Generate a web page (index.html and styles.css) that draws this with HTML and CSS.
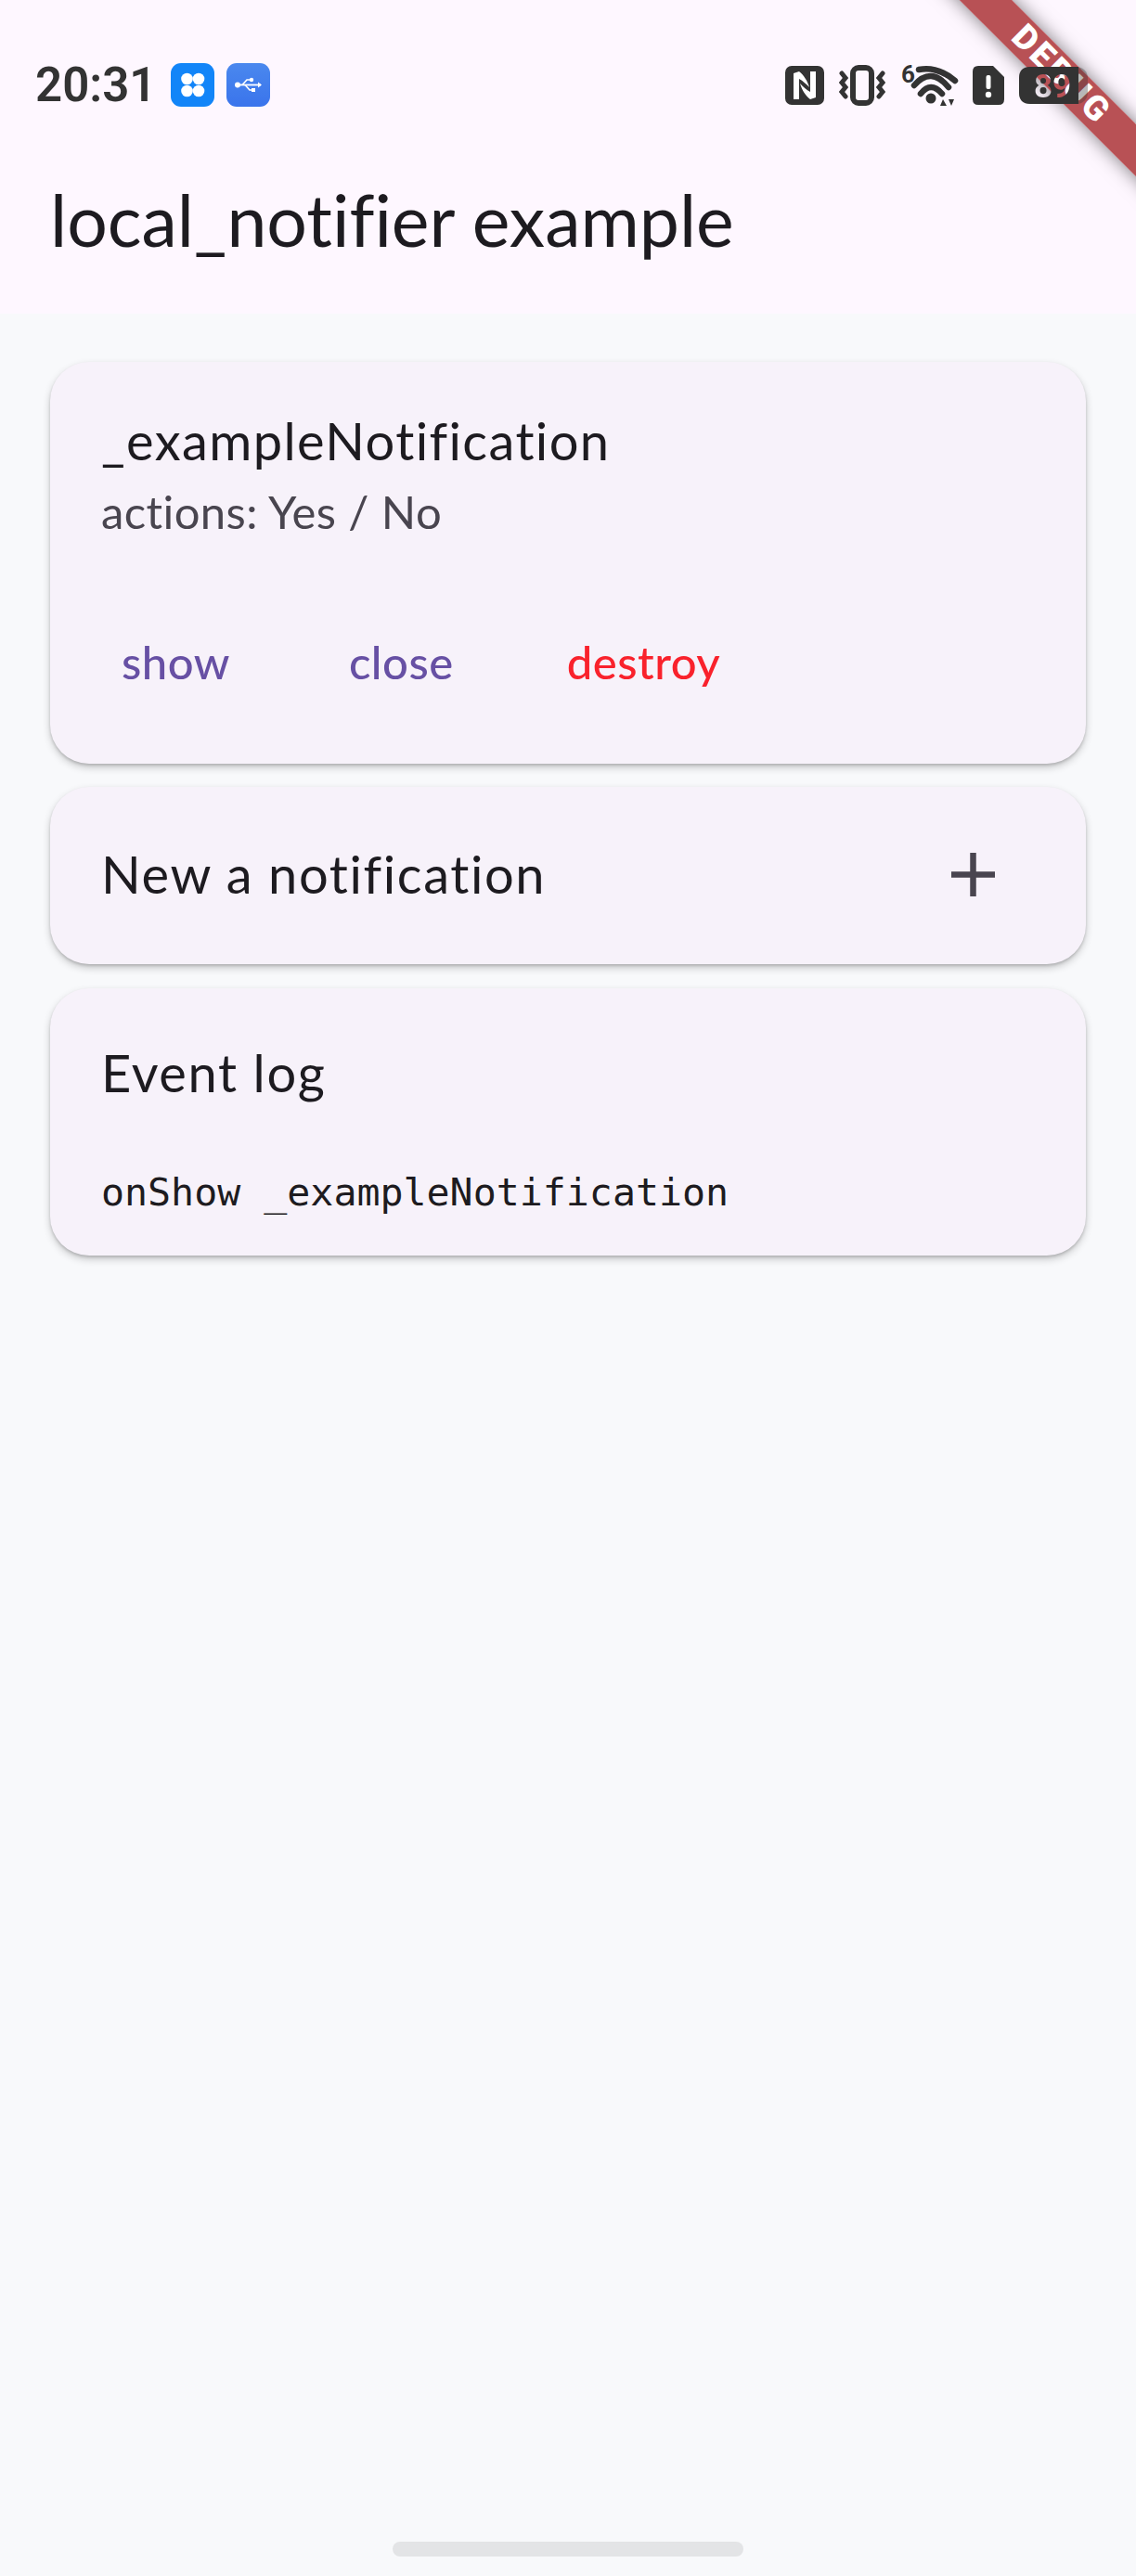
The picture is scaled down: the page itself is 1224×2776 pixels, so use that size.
FILE: index.html
```html
<!DOCTYPE html>
<html lang="en">
<head>
    <meta charset="UTF-8">
    <meta name="viewport" content="width=device-width, initial-scale=1.0">
    <title>local_notifier example</title>
    <link rel="stylesheet" href="styles.css">
</head>
<body>
    <div id="screen">
        <!-- Status bar and app bar -->
        <div class="top-area">
            <div class="status-bar">
                <span class="clock">20:31</span>
                <span class="app-icon app-icon-blue">
                    <svg width="47" height="47" viewBox="0 0 47 47">
                        <circle cx="17.5" cy="17" r="6.3" fill="#fff"/>
                        <circle cx="30" cy="17" r="6.3" fill="#fff"/>
                        <circle cx="17.5" cy="30" r="6.3" fill="#fff"/>
                        <circle cx="30" cy="30" r="6.3" fill="#fff"/>
                    </svg>
                </span>
                <span class="app-icon app-icon-usb">
                    <svg width="47" height="47" viewBox="0 0 47 47">
                        <path d="M10 23.500H37" stroke="#fff" stroke-width="1.800" fill="none"/>
                        <circle cx="12" cy="23.500" r="3" fill="#fff"/>
                        <path d="M17 23.500L22 18H26M20 23.500L25 29H28" stroke="#fff" stroke-width="1.600" fill="none"/>
                        <circle cx="27" cy="18" r="2.200" fill="#fff"/>
                        <rect x="27" y="27" width="4" height="4" fill="#fff"/>
                        <path d="M34 20.500L38 23.500L34 26.500Z" fill="#fff"/>
                    </svg>
                </span>
                <div class="status-icons">
                    <svg width="42" height="42" viewBox="0 0 42 42">
                        <rect width="42" height="42" rx="7" fill="#333"/>
                        <path d="M9 8L15 6C20 10 24 16 26 23C23 20 19 16 15 14V36H9Z" fill="#fff"/>
                        <path d="M33 34L27 36C22 32 18 26 16 19C19 22 23 26 27 28V6H33Z" fill="#fff"/>
                    </svg>
                    <svg width="50" height="44" viewBox="0 0 50 44">
                        <rect x="15" y="3" width="20" height="38" rx="6" fill="none" stroke="#333" stroke-width="6"/>
                        <path d="M3 9L7 14L3 19L7 24L3 29L7 34M47 9L43 14L47 19L43 24L47 29L43 34" fill="none" stroke="#333" stroke-width="5" stroke-linecap="round"/>
                    </svg>
                    <svg class="wifi-icon" width="62" height="46" viewBox="0 0 62 46">
                        <text x="1" y="20" class="wifi-six">6</text>
                        <path d="M20 6Q40 2 59 18M15 23Q33 2 52 25M22 32Q33 18 45 32" fill="none" stroke="#333" stroke-width="6.500" stroke-linecap="round"/>
                        <circle cx="33" cy="37" r="5.500" fill="#333"/>
                        <path d="M46 38L50 45H43ZM52 38H58L55 45Z" fill="#333"/>
                    </svg>
                    <svg width="34" height="42" viewBox="0 0 34 42">
                        <path d="M6 0H22L34 12V36Q34 42 28 42H6Q0 42 0 36V6Q0 0 6 0Z" fill="#333"/>
                        <rect x="14.500" y="10" width="5" height="15" rx="2" fill="#fff"/>
                        <circle cx="17" cy="31" r="3.200" fill="#fff"/>
                    </svg>
                    <!-- digits are cut out of the battery, the banner shows through them -->
                    <svg width="74" height="40" viewBox="0 0 74 40">
                        <mask id="batteryDigits">
                            <rect width="74" height="40" fill="#fff"/>
                            <text x="36" y="33" text-anchor="middle" class="battery-level">89</text>
                        </mask>
                        <g mask="url(#batteryDigits)">
                            <rect width="74" height="40" rx="12" fill="#333" fill-opacity="0.35"/>
                            <path d="M12 0H64V40H12Q0 40 0 28V12Q0 0 12 0Z" fill="#333"/>
                        </g>
                    </svg>
                </div>
            </div>
            <div class="app-bar">local_notifier example</div>
        </div>

        <!-- Cards -->
        <div class="content">
            <div class="card card-notification">
                <div class="card-title">_exampleNotification</div>
                <div class="card-subtitle">actions: Yes / No</div>
                <div class="card-actions">
                    <span class="text-button btn-show">show</span>
                    <span class="text-button btn-close">close</span>
                    <span class="text-button btn-destroy">destroy</span>
                </div>
            </div>
            <div class="card card-new">
                <div class="card-title">New a notification</div>
                <svg class="plus-icon" width="47" height="47" viewBox="0 0 47 47">
                    <path d="M23.500 0V47M0 23.500H47" stroke="#49454f" stroke-width="6.500" fill="none"/>
                </svg>
            </div>
            <div class="card card-log">
                <div class="card-title">Event log</div>
                <div class="log-line">onShow _exampleNotification</div>
            </div>
        </div>

        <div class="home-indicator"></div>

        <div class="debug-corner">
            <div class="debug-banner">DEBUG</div>
        </div>
    </div>
</body>
</html>
```

FILE: styles.css
```css
* {
    box-sizing: border-box;
}
body {
    margin: 0;
    font-family: 'Lato', 'Noto Sans', sans-serif;
    font-variant-ligatures: none;
    background-color: #f8f9fb;
    color: #1d1b20;
}
#screen {
    position: relative;
    width: 1224px;
    height: 2776px;
    display: flex;
    flex-direction: column;
    overflow: hidden;
}
.top-area {
    height: 338px;
    background-color: #fef7ff;
}
/* the status bar is drawn by the system, on top of the debug banner */
.status-bar {
    position: relative;
    z-index: 2;
    display: flex;
    align-items: center;
    height: 47px;
    margin-top: 68px;
    padding: 0 52px 0 38px;
}
.clock {
    font-family: 'Roboto', sans-serif;
    font-size: 51px;
    font-weight: 600;
    color: #333;
    margin-right: 16px;
}
.app-icon {
    display: block;
    width: 47px;
    height: 47px;
    border-radius: 11px;
    margin-right: 13px;
}
.app-icon svg {
    display: block;
}
.app-icon-blue {
    background-color: #1285f8;
}
.app-icon-usb {
    background: linear-gradient(#4a88ee, #3a74ec);
}
.status-icons {
    display: flex;
    align-items: center;
    gap: 16px;
    margin-left: auto;
}
.wifi-icon {
    overflow: visible;
}
.wifi-six {
    font-family: 'Roboto', sans-serif;
    font-size: 26px;
    font-weight: 700;
    fill: #333;
}
.battery-level {
    font-family: 'Roboto', sans-serif;
    font-size: 35px;
    font-weight: 700;
    fill: #000;
}
.app-bar {
    margin-top: 73px;
    padding-left: 54px;
    font-size: 77px;
    line-height: 96px;
}
.content {
    display: flex;
    flex-direction: column;
    gap: 25px;
    padding: 52px 54px 0;
}
.card {
    background-color: #f7f2fa;
    border-radius: 42px;
    box-shadow: 0 4px 8px rgba(0, 0, 0, 0.2), 0 2px 3px rgba(0, 0, 0, 0.14);
    padding: 0 55px;
}
.card-notification {
    height: 433px;
    padding-top: 54px;
}
.card-title {
    font-size: 56px;
    line-height: 62px;
    letter-spacing: 1.4px;
}
.card-new .card-title, .card-log .card-title {
    letter-spacing: 1.6px;
}
.card-subtitle {
    font-size: 49px;
    line-height: 70px;
    margin-top: 10px;
    color: #49454f;
    letter-spacing: 0.4px;
}
.card-actions {
    display: flex;
    margin-top: 97px;
    margin-left: 22px;
    gap: 122px;
}
.text-button {
    font-size: 49px;
    line-height: 60px;
    font-weight: 500;
    letter-spacing: 0.5px;
}
.btn-show, .btn-close {
    color: #6750a4;
}
.btn-show {
    margin-right: 6px;
}
.btn-destroy {
    color: #f9222c;
}
.card-new {
    display: flex;
    align-items: center;
    justify-content: space-between;
    height: 191px;
    padding-right: 98px;
    padding-bottom: 3px;
}
.card-log {
    height: 288px;
    margin-top: 1px;
    padding-top: 60px;
}
.log-line {
    margin-top: 71px;
    font-family: 'DejaVu Sans Mono', monospace;
    font-size: 41.6px;
    line-height: 54px;
}
.home-indicator {
    width: 378px;
    height: 16px;
    border-radius: 8px;
    background-color: #e3e4e6;
    margin: auto auto 21px;
}
.debug-corner {
    position: absolute;
    z-index: 1;
    top: 0;
    right: 0;
    width: 300px;
    height: 300px;
    overflow: hidden;
    pointer-events: none;
}
.debug-banner {
    position: absolute;
    left: 19px;
    top: 61px;
    width: 400px;
    height: 40px;
    transform: rotate(45deg);
    background-color: rgba(151, 1, 4, 0.68);
    box-shadow: 0 0 20px rgba(0, 0, 0, 0.5);
    color: #fff;
    text-align: center;
    font-family: 'Roboto', sans-serif;
    font-size: 37px;
    font-weight: 900;
    line-height: 38px;
    letter-spacing: 3px;
}
```
